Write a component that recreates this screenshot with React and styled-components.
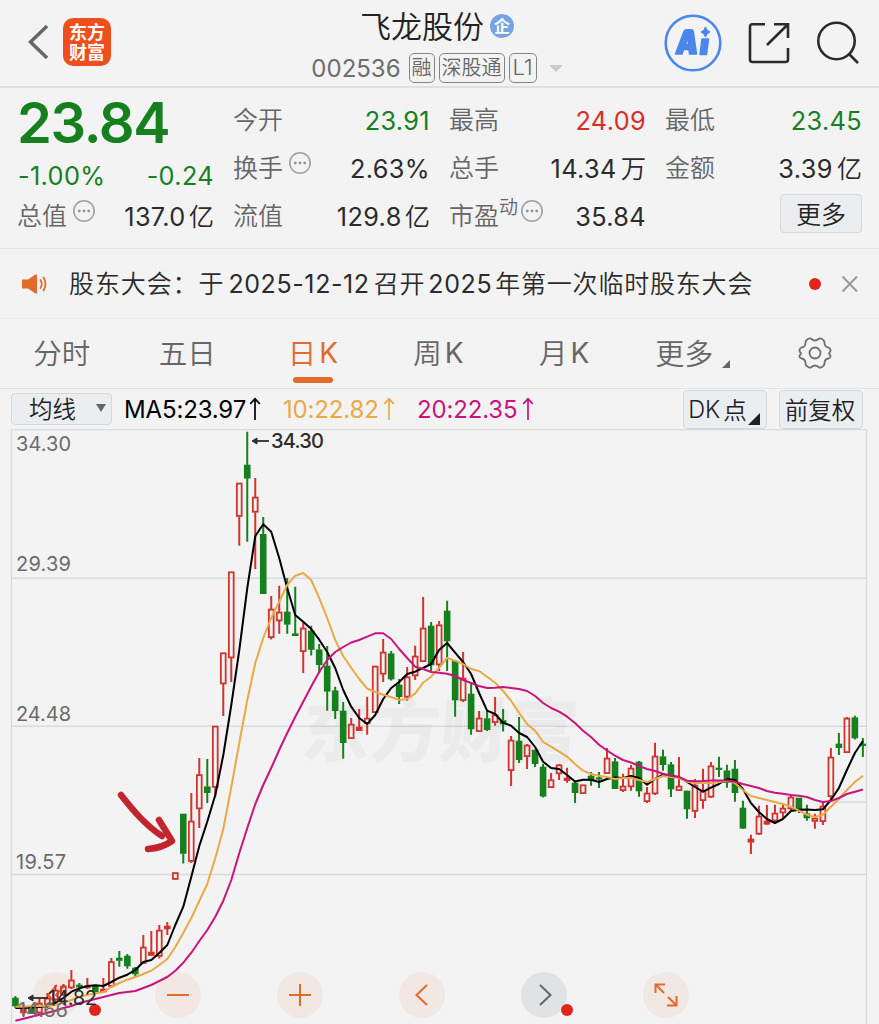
import styled, { createGlobalStyle } from 'styled-components';

const GREEN = '#16801f';
const RED = '#d0342f';
const ORANGE = '#e26b2a';

const GlobalStyle = createGlobalStyle`
* { box-sizing: border-box; }
body {
margin: 0;
background: #f3f3f3;
font-family: Inter, "Noto Sans CJK SC", sans-serif;
font-weight: 375;
color: #2b2b2b;
overflow: hidden;
}
`;

const Page = styled.div`
width: 879px;
height: 1024px;
overflow: hidden;
display: flex;
flex-direction: column;
background: #f3f3f3;
`;

const Cjk = styled.span`
font-family: "Noto Sans CJK SC", sans-serif;
font-weight: 350;
font-size: ${p => p.$size ? p.$size + 'px' : 'inherit'};
line-height: 0;
letter-spacing: ${p => p.$ls || 0}px;
margin-left: ${p => p.$ml || 0}px;
margin-right: ${p => p.$mr || 0}px;
`;

/* ---------- header ---------- */
const Header = styled.header`
height: 88px;
flex: none;
display: grid;
grid-template-columns: 240px 1fr 240px;
border-bottom: 2px solid #dfe1e5;
`;

const HeaderLeft = styled.div`
display: flex;
align-items: center;
padding-left: 28px;
gap: 15px;
padding-bottom: 2px;
`;

const Logo = styled.div`
width: 48px;
height: 48px;
border-radius: 10px;
background: #ee4f1d;
color: #fff;
display: grid;
place-content: center;
text-align: center;
font: 700 18px/20px "Noto Sans CJK SC", sans-serif;
padding-bottom: 2px;
`;

const HeaderMid = styled.div`
display: flex;
flex-direction: column;
align-items: center;
padding-right: 5px;
`;

const TitleRow = styled.div`
display: flex;
align-items: center;
height: 52px;
gap: 6px;
`;

const Title = styled.h1`
margin: 0;
font: 350 31px/52px "Noto Sans CJK SC", sans-serif;
color: #222;
padding-bottom: 2px;
`;

const Qi = styled.span`
width: 24px;
height: 24px;
border-radius: 50%;
background: #78a3e2;
color: #fff;
font: 700 16px/23px "Noto Sans CJK SC", sans-serif;
text-align: center;
`;

const CodeRow = styled.div`
display: flex;
align-items: center;
height: 32px;
gap: 4px;
color: #6d6d6d;
`;

const Code = styled.span`
font-size: 24px;
letter-spacing: 0;
margin-right: 4px;
`;

const Tag = styled.span`
height: 30px;
border: 1.5px solid #858585;
border-radius: 5px;
padding: 0 2px;
font: 350 20px/26px "Noto Sans CJK SC", sans-serif;
color: #666;
`;

const Level = styled(Tag)`
font: 350 22px/26px Inter, sans-serif;
padding: 0 3px;
`;

const Down = styled.span`
width: 0;
height: 0;
border: 7px solid transparent;
border-top-color: #c9cbce;
border-bottom: 0;
margin-left: 8px;
`;

const HeaderRight = styled.div`
display: flex;
align-items: center;
gap: 26px;
padding-left: 25px;
`;

/* ---------- quote ---------- */
const Quote = styled.section`
height: 161px;
flex: none;
display: grid;
grid-template-columns: repeat(4, 196px);
column-gap: 20px;
padding: 8px 0 0 18px;
border-bottom: 1px solid #e2e5e8;
`;

const Col = styled.div`
display: flex;
flex-direction: column;
`;

const Price = styled.div`
height: 57px;
font-size: 56px;
line-height: 55px;
font-weight: 600;
letter-spacing: -1.3px;
margin-left: -1px;
color: ${GREEN};
`;

const Pair = styled.div`
height: ${p => p.$h || 48}px;
display: flex;
align-items: center;
justify-content: space-between;
font-size: 25.3px;
color: ${p => p.$color || '#2b2b2b'};
letter-spacing: 0.35px;
white-space: nowrap;
`;

const Label = styled.span`
display: flex;
align-items: center;
font: 350 25px/44px "Noto Sans CJK SC", sans-serif;
letter-spacing: 0;
padding-bottom: 4px;
margin-left: -1px;
color: #666;
`;

const Dyn = styled.span`
font-size: 19px;
line-height: 20px;
margin-top: -16px;
`;

const MoreBtn = styled.button`
width: 82px;
height: 39px;
margin: 2px 0 0 auto;
border: 1px solid #d3dade;
border-radius: 4px;
background: #ebeef0;
font: 350 25px/34px "Noto Sans CJK SC", sans-serif;
color: #222;
padding: 0 0 2px;
`;

/* ---------- notice ---------- */
const Notice = styled.section`
height: 70px;
flex: none;
display: flex;
align-items: center;
padding: 0 20px 0 21px;
border-bottom: 1px solid #e8eaec;
`;

const NoticeText = styled.div`
flex: 1;
margin-left: 20px;
font-size: 25px;
line-height: 30px;
letter-spacing: 0.6px;
white-space: nowrap;
`;

const Dot = styled.i`
width: 12px;
height: 12px;
border-radius: 50%;
background: #e3241c;
`;

/* ---------- tabs ---------- */
const Tabs = styled.nav`
height: 70px;
flex: none;
display: grid;
grid-template-columns: repeat(7, 1fr);
border-bottom: 1px solid #e3e5e8;
`;

const Tab = styled.div`
position: relative;
display: flex;
align-items: center;
justify-content: center;
padding: 0 2px 1px 0;
font-size: 28px;
color: ${p => p.$active ? ORANGE : '#666'};
${Cjk} { margin-top: -3px; }
&::after {
content: "";
display: ${p => p.$active ? 'block' : 'none'};
position: absolute;
bottom: 5px;
left: 42px;
width: 40px;
height: 6px;
border-radius: 3px;
background: ${ORANGE};
}
`;

const Corner = styled.i`
width: 0;
height: 0;
border-left: ${p => p.$s}px solid transparent;
border-bottom: ${p => p.$s}px solid currentColor;
align-self: flex-end;
margin: 0 0 ${p => p.$b}px ${p => p.$l}px;
`;

/* ---------- indicator bar ---------- */
const MaBar = styled.div`
height: 40px;
flex: none;
display: flex;
align-items: center;
padding: 0 16px 0 11px;
`;

const Select = styled.button`
width: 101px;
height: 32px;
display: flex;
align-items: center;
justify-content: space-between;
padding: 0 5px 2px 17px;
border: 1px solid #d3dade;
border-radius: 4px;
background: #ebeef0;
font: 350 23.5px/28px "Noto Sans CJK SC", sans-serif;
color: #222;
`;

const Arrow = styled.span`
width: 0;
height: 0;
border: 5px solid transparent;
border-top: 8px solid #666;
border-bottom: 0;
`;

const Ma = styled.span`
display: flex;
align-items: center;
width: ${p => p.$w}px;
margin-left: ${p => p.$ml}px;
justify-content: space-between;
font-size: 24px;
letter-spacing: -0.15px;
color: ${p => p.$c};
white-space: nowrap;
`;

const ToolBtn = styled.button`
width: 84px;
height: 39px;
display: flex;
align-items: center;
justify-content: center;
margin-left: ${p => p.$ml};
padding: 0 2px 0 0;
border: 1px solid #d3dade;
border-radius: 4px;
background: #ebeef0;
color: #222;
font-family: Inter, "Noto Sans CJK SC", sans-serif;
font-size: 23.5px;
font-weight: 350;
white-space: nowrap;
`;

/* ---------- chart ---------- */
const Chart = styled.div`
position: relative;
flex: 1;
`;

const Plot = styled.svg`
display: block;
position: relative;
pointer-events: none;
`;

const Controls = styled.div`
position: absolute;
left: 33px;
top: 543px;
display: flex;
gap: 76px;
`;

const Round = styled.button`
position: relative;
width: 46px;
height: 46px;
padding: 0;
border: 0;
border-radius: 50%;
background: ${p => p.$gray ? '#e0e3e5' : '#f1e8e4'};
svg { display: block; }
`;

const Badge = styled(Dot)`
position: absolute;
left: ${p => p.$x}px;
top: 32px;
`;

// [high, body top, body bottom, low, kind]  g = down, r = up, s = up with a filled body
const candles = [
[996,998,1006,1008,'g'],[1004,1007,1013,1016,'s'],[1006,1008,1013,1014,'g'],[998,1003,1013,1014,'r'],[993,998,1006,1008,'r'],
[985,990,1000,1002,'r'],[984,986,995,996,'r'],[970,980,988,989,'r'],[983,985,987,990,'g'],[978,986,988,989,'s'],
[985,986,992,992,'g'],[978,989,992,992,'r'],[958,961.5,986.5,988,'r'],[951,958,960.5,966.7,'g'],[954,956,966,968.7,'g'],
[967,968,974,977.5,'g'],[935,947,963.5,964,'r'],[931,952,955.5,956,'s'],[925,930,956.5,958.5,'r'],[922,926,929,935,'s'],
[872.5,872.5,879.5,879.5,'r'],[814,814,853.5,863.5,'g'],[793,821,861.5,863,'r'],[758,774.5,809,828,'r'],[759,786.7,792.7,803,'g'],
[726,726,787.5,797,'r'],[652.7,652.7,684,716,'r'],[571.7,571.7,658,682,'r'],[483,483,516.5,545.7,'r'],[431.7,465,478.3,541.7,'g'],
[478,497,512.3,569,'r'],[517,534.3,593.7,594,'g'],[596,609,637.7,639.5,'r'],[585.7,612,621,633.7,'r'],[578,612,624.3,633.7,'g'],
[586.7,633.7,635.7,636,'g'],[621.7,628,651.7,673,'r'],[625.7,631,649.5,655.5,'g'],[644,649.7,664.7,672.7,'g'],[646,666,691.3,710.7,'g'],
[686.7,690.7,710.7,719,'g'],[702,711,742.7,758.7,'g'],[718,724,738.7,739,'r'],[709,727,730.7,731,'s'],[696.7,718,723.5,734.7,'r'],
[666,666,712.7,713,'r'],[639,652,674.3,682,'r'],[651,653.7,679,680.5,'g'],[679,685,696.7,704,'g'],[667,676.7,697.3,700.7,'r'],
[645.7,656,676,680,'r'],[597,628,661.7,662,'r'],[622,626,665,671,'g'],[621,624.7,665,671,'r'],[600.7,611,641,671,'g'],
[661,661,700,716.7,'g'],[652,678,700.7,702,'r'],[683,694,729,734.7,'g'],[711,718,731.7,732,'r'],[711,718.7,729.7,731,'g'],
[697,714.7,722.7,725.7,'r'],[709,720.5,724,731.5,'g'],[736,740,770.7,786,'r'],[717,741,759.7,763,'g'],[744,745,756.7,769,'r'],
[750,750,763.7,767,'g'],[764,767,796.3,797.5,'g'],[773,779.7,787.7,788,'r'],[764,764.7,774,780,'r'],[767.7,778,780.7,782.7,'s'],
[780.7,783,792.7,803,'g'],[784.7,784.7,793.7,794,'r'],[772,776,780.7,785.7,'g'],[772,777.7,779.3,788,'g'],[748,758,773.7,774,'r'],
[758,761.7,788.7,789,'g'],[773.7,786,790.7,792,'r'],[765,768,787,790.7,'r'],[761,762,791,796.7,'g'],[787,793,801.7,803,'r'],
[742.7,756,794,795,'r'],[749.7,756.7,764.7,770.7,'g'],[762,764.7,789,797,'g'],[757,786,790.7,791,'r'],[790.7,791,809,818.7,'g'],
[779,785,811.5,818,'r'],[768.7,791,800.7,808.7,'r'],[762,765.7,797.3,798,'r'],[756.7,768,769.5,777,'g'],[764.7,770.7,782.7,787.7,'g'],
[760,769,792.7,801.7,'g'],[800.7,808,828.3,829,'g'],[834.7,839,842.3,854,'s'],[805.7,816,834.3,835,'r'],[805,821,824.3,825,'s'],
[804.7,813,821,822,'r'],[804.7,808,813,818,'r'],[795,797,809,810,'r'],[798,798,810,813,'g'],[804.7,813.7,818,820.7,'g'],
[813.7,818,821.5,828.7,'r'],[802,806,821.7,825,'r'],[748,757,796.7,799,'r'],[733,744,747.7,755,'g'],[717,718,752.7,753,'r'],
[715.7,717.7,738,739.5,'g'],[738,744,745.2,757,'g'],
];

const ma5 = [1008,1008,1007.5,1007,1006,1003,998,991.7,988.3,986,985.3,986,982,977.7,974.7,970,962,960,953,945,925,906.7,876.7,846,821.5,
795,755,705,650,588,536,524.3,531.7,558,588,615,621.7,629,639.7,652,668,690,706.7,718,724,715,699,688,682,674,671.7,668,664,650,643,
652.7,662,674,693,710.7,714,722.7,725.7,733,737,747,761.7,768,769,775,781.5,779.7,779.7,782,779,777.5,778,776,778,784.7,779,774.7,776,
777,782,787,791.7,787.7,784,779,780,789,803,812,819,823,819,811,809.7,809.5,810,809.3,800,788,770,753,741];

const ma10 = [1006.7,1006.7,1006,1006,1005.7,1005,1002.7,1000,996.7,995,993.5,992,987,983,979.7,977,974,970.7,965,959,947,933,918,901,884,
858,829,787,743,700,663,638,618,601.7,585,575.7,573,580,598,618,640,656,667.7,679,688.7,691.7,694.7,697,700,699,693.7,682.7,676.7,667.7,658,
660.7,664,669,671,676.7,682.7,691,700.7,713,724,730.7,742,746.7,751.7,756.7,764,770.7,774,775.7,777,779,778,777.7,780,782,779,776,777,
778,781.7,783,783,783,782,781,783,790,796,798,800,802,804,806.7,810.7,814.7,817,814.7,806.7,799,790,782,775.7];

const ma20 = [1020.7,1018.7,1016.7,1014.7,1012.7,1010.7,1008,1006,1003,1001,999,997,995,993,992,991,988,985,981,977,970.7,962.7,952.7,941,930,
916.7,900.7,880,853,828,804,785,768,750,733,717,701.7,686.5,672,660,652,647,642.5,640,636.7,633.3,633.3,639,649,658,666.7,669,672,672.7,673.7,
676,680,683,686,688,687.7,687,688,689,691,696,703,708,711.7,716.7,723,730.7,737,744.7,750.5,755.7,760,762.5,766,769,771,773.7,775.7,
777,780.7,781.3,781,780.5,780.5,780.5,781.7,784,786,788,791,792.7,793.7,795,795.7,797,800,802,801,798,794,791.7,789.5];

const px = i => 15.4 + i * 7.995;
const line = arr => arr.map((y, i) => px(i).toFixed(1) + ',' + y).join(' ');

function Info() {
  return <svg width="24" height="24" viewBox="0 0 24 24">
    <circle cx="12" cy="12" r="10.2" fill="none" stroke="#a0a0a6" strokeWidth="1.6" />
    <circle cx="7.3" cy="12" r="1.4" fill="#96969c" />
    <circle cx="12" cy="12" r="1.4" fill="#96969c" />
    <circle cx="16.7" cy="12" r="1.4" fill="#96969c" />
  </svg>
}

const InfoBox = styled.span`
display: flex;
margin: -7px 0 0 ${p => p.$ml}px;
`;

function Up() {
  return <svg width="12" height="24" viewBox="0 0 12 24" fill="none" stroke="currentColor" strokeWidth="1.7">
    <path d="M6 23V2M1.2 6.8L6 1.8l4.8 5" />
  </svg>
}

function Candle({ i, c }) {
  const [h, t, b, l, k] = c;
  const x = px(i);
  const color = k === 'g' ? GREEN : RED;
  const hh = Math.max(b - t, 1.5);
  return <g stroke={color} fill={k === 'r' ? 'none' : color}>
    <path d={`M${x} ${h}V${t}M${x} ${b}V${l}`} strokeWidth="2" />
    <rect x={x - 2.4} y={t + 0.6} width="4.8" height={Math.max(hh - 1.2, 0.4)} strokeWidth="1.8" />
  </g>
}

function KLine() {
  return <Plot width="879" height="595" viewBox="0 429 879 595">
    <g stroke="#d6dbe2" strokeWidth="1.4" fill="none">
      <path d="M11.5 1024V429.5H866.5V1024" />
      <path d="M11.5 578.3H866.5M11.5 726.3H866.5M11.5 874.5H866.5M827 802H866.5" />
    </g>
    <text transform="translate(300 756) skewX(-5)" fontFamily="Noto Sans CJK SC" fontWeight="900" fontSize="69" fill="#000" opacity=".028">东方财富</text>
    {candles.map((c, i) => <Candle key={i} i={i} c={c} />)}
    <g fill="none" strokeWidth="2" strokeLinejoin="round">
      <polyline points={line(ma5)} stroke="#000" />
      <polyline points={line(ma10)} stroke="#eaa945" />
      <polyline points={line(ma20)} stroke="#c9147b" />
    </g>
    <g fontFamily="Inter" fontSize="20" fill="#6b6b6b">
      <text x="16" y="451" textLength="55">34.30</text>
      <text x="16" y="571" textLength="55">29.39</text>
      <text x="16" y="721" textLength="55">24.48</text>
      <text x="16" y="869" textLength="50">19.57</text>
      <text x="18" y="1017" textLength="50">14.66</text>
    </g>
    <g fontFamily="Inter" fontSize="20" fontWeight="500" fill="#2d2d2d">
      <text x="271" y="448" textLength="53">34.30</text>
      <text x="48" y="1005" fontWeight="400" textLength="49">14.82</text>
    </g>
    <g stroke="#2d2d2d" fill="#2d2d2d" strokeWidth="1.8">
      <path d="M269 441H254" /><path d="M252 441l5-3v6z" strokeWidth="1" />
      <path d="M48 998H30" /><path d="M28 998l5-3v6z" strokeWidth="1" />
    </g>
    <g fill="none" stroke="#c1262e" strokeWidth="6.5" strokeLinecap="round" strokeLinejoin="round">
      <path d="M121 795C132 809 145 825 162 836" />
      <path d="M159 820L172 841Q162 848 148 849" />
    </g>
  </Plot>
}

function Icon({ d, c = ORANGE, w = 2 }) {
  return <svg width="46" height="46" viewBox="0 0 46 46" fill="none" stroke={c} strokeWidth={w}><path d={d} /></svg>
}

export default function App() {
  return <Page>
    <GlobalStyle />
    <Header>
      <HeaderLeft>
        <svg width="20" height="34" viewBox="0 0 20 34" fill="none" stroke="#666" strokeWidth="3.4"><path d="M19 1L2.5 17L19 33" /></svg>
        <Logo>东方<br />财富</Logo>
      </HeaderLeft>
      <HeaderMid>
        <TitleRow><Title>飞龙股份</Title><Qi>企</Qi></TitleRow>
        <CodeRow>
          <Code>002536</Code><Tag>融</Tag><Tag>深股通</Tag><Level>L1</Level><Down />
        </CodeRow>
      </HeaderMid>
      <HeaderRight>
        <svg width="58" height="58" viewBox="0 0 58 58">
          <circle cx="29" cy="29" r="27.3" fill="none" stroke="#4a87ec" strokeWidth="2.6" />
          <g fill="#4a87ec" stroke="#4a87ec" strokeWidth="1.5" strokeLinejoin="round">
            <path fillRule="evenodd" d="M11.5 40L20 17.5Q20.7 15.7 22.5 15.7H27Q29 15.7 29.3 17.5L32.5 40H25.5L25 35.5H19.5L18 40ZM21.3 30.5H24.5L24 23.5Z" />
            <path d="M38 25H44.5L42.5 40.5H36Z" />
            <path d="M41.5 13.5Q42.3 17 45.5 18Q42.3 19 41.5 22.5Q40.7 19 37.5 18Q40.7 17 41.5 13.5Z" />
          </g>
        </svg>
        <svg width="42" height="42" viewBox="0 0 42 42" fill="none" stroke="#2b2b2b" strokeWidth="2.6">
          <path d="M17 2.3H4.5Q2 2.3 2 5V37.5Q2 40 4.5 40H37.5Q40 40 40 37.5V26M26 2.3H40V16M40 2.3L19 23" />
        </svg>
        <svg width="44" height="44" viewBox="0 0 44 44" fill="none" stroke="#2b2b2b" strokeWidth="2.6">
          <circle cx="20.5" cy="20" r="18.2" /><path d="M33 33L42 42" />
        </svg>
      </HeaderRight>
    </Header>

    <Quote>
      <Col>
        <Price>23.84</Price>
        <Pair $h={44} $color={GREEN}><span>-1.00%</span><span>-0.24</span></Pair>
        <Pair $h={38}><Label>总值<InfoBox $ml={5}><Info /></InfoBox></Label><span>137.0<Cjk $ml={3}>亿</Cjk></span></Pair>
      </Col>
      <Col>
        <Pair $color={GREEN}><Label>今开</Label><span>23.91</span></Pair>
        <Pair><Label>换手<InfoBox $ml={5}><Info /></InfoBox></Label><span>2.63%</span></Pair>
        <Pair><Label>流值</Label><span>129.8<Cjk $ml={3}>亿</Cjk></span></Pair>
      </Col>
      <Col>
        <Pair $color="#dd2c24"><Label>最高</Label><span>24.09</span></Pair>
        <Pair><Label>总手</Label><span>14.34<Cjk $ml={4}>万</Cjk></span></Pair>
        <Pair><Label>市盈<Dyn>动</Dyn><InfoBox $ml={2}><Info /></InfoBox></Label><span>35.84</span></Pair>
      </Col>
      <Col>
        <Pair $color={GREEN}><Label>最低</Label><span>23.45</span></Pair>
        <Pair><Label>金额</Label><span>3.39<Cjk $ml={4}>亿</Cjk></span></Pair>
        <MoreBtn>更多</MoreBtn>
      </Col>
    </Quote>

    <Notice>
      <svg width="28" height="24" viewBox="0 0 28 24" fill="none" stroke={ORANGE} strokeWidth="1.8" strokeLinecap="round">
        <path d="M2 7.5H7L14.5 2.5Q16 2 16 3.5V20.5Q16 22 14.5 21.5L7 16.5H2Q1 16.5 1 15.5V8.5Q1 7.5 2 7.5Z" fill={ORANGE} stroke="none" />
        <path d="M19.5 8Q22 12 19.5 16M22.5 5.5Q26.5 12 22.5 18.5" />
      </svg>
      <NoticeText>
        <Cjk $ls={0.9} $mr={4}>股东大会：于</Cjk>2025-12-12<Cjk $ml={4} $mr={3} $ls={0.8}>召开</Cjk>
        2025<Cjk $ml={3} $ls={0.8}>年第一次临时股东大会</Cjk>
      </NoticeText>
      <Dot />
      <svg width="38" height="20" viewBox="0 0 38 20" stroke="#999" strokeWidth="2"><path d="M21.5 2.5L36 17.5M36 2.5L21.5 17.5" /></svg>
    </Notice>

    <Tabs>
      <Tab><Cjk $size={28.5}>分时</Cjk></Tab>
      <Tab><Cjk $size={28.5}>五日</Cjk></Tab>
      <Tab $active><Cjk $size={28.5} $mr={3}>日</Cjk>K</Tab>
      <Tab><Cjk $size={28.5} $mr={3}>周</Cjk>K</Tab>
      <Tab><Cjk $size={28.5} $mr={3}>月</Cjk>K</Tab>
      <Tab><Cjk $size={29} $ml={6}>更多</Cjk><Corner $s={8} $b={19} $l={9} /></Tab>
      <Tab>
        <svg width="34" height="32" viewBox="0 0 34 32" fill="none" stroke="#707070" strokeWidth="1.8" strokeLinejoin="round">
          <path d="M11 1.5Q12.5 1 13.5 2Q17 5 20.5 2Q21.5 1 23 1.5Q26.5 3 26.5 5.5Q26.5 10 30.5 10.5Q32 11 32.3 12.5Q33 14 31.5 15.5Q30.5 16 31.5 17.5Q33 18.500 32.3 20Q32 21 30.5 21.500Q26.5 22 26.5 26.5Q26.5 29 23 30.5Q21.5 31 20.5 30Q17 27 13.5 30Q12.5 31 11 30.5Q7.5 29 7.5 26.5Q7.500 22 3.5 21.5Q2 21 1.700 20Q1 18.500 2.500 17.500Q3.500 16 2.500 15.500Q1 14 1.700 12.5Q2 11 3.5 10.5Q7.5 10 7.5 5.5Q7.5 3 11 1.5Z" />
          <circle cx="17" cy="16" r="5.5" />
        </svg>
      </Tab>
    </Tabs>

    <MaBar>
      <Select>均线<Arrow /></Select>
      <Ma $w={137} $ml={12} $c="#000">MA5:23.97<Up /></Ma>
      <Ma $w={112} $ml={22} $c="#eaa945">10:22.82<Up /></Ma>
      <Ma $w={117} $ml={22} $c="#c9147b">20:22.35<Up /></Ma>
      <ToolBtn $ml="auto">DK<Cjk $ml={3}>点</Cjk><Corner $s={12} $b={3} $l={1} /></ToolBtn>
      <ToolBtn $ml="12px">前复权</ToolBtn>
    </MaBar>

    <Chart>
      <Controls>
        <Round><Icon d="M24 13L15 23L24 33M32 13L23 23L32 33" /><Badge $x={56} /></Round>
        <Round><Icon d="M12 23H34" /></Round>
        <Round><Icon d="M12 23H34M23 12V34" /></Round>
        <Round><Icon d="M28 13L17.5 23L28 33" /></Round>
        <Round $gray><Icon c="#666" d="M19 13L29.5 23L19 33" /><Badge $x={40} /></Round>
        <Round><Icon d="M12.5 21V12.5H22M12.5 12.5L21 21M33.5 24V33.5H24M33.5 33.5L25 25" /></Round>
      </Controls>
      <KLine />
    </Chart>
  </Page>
}
